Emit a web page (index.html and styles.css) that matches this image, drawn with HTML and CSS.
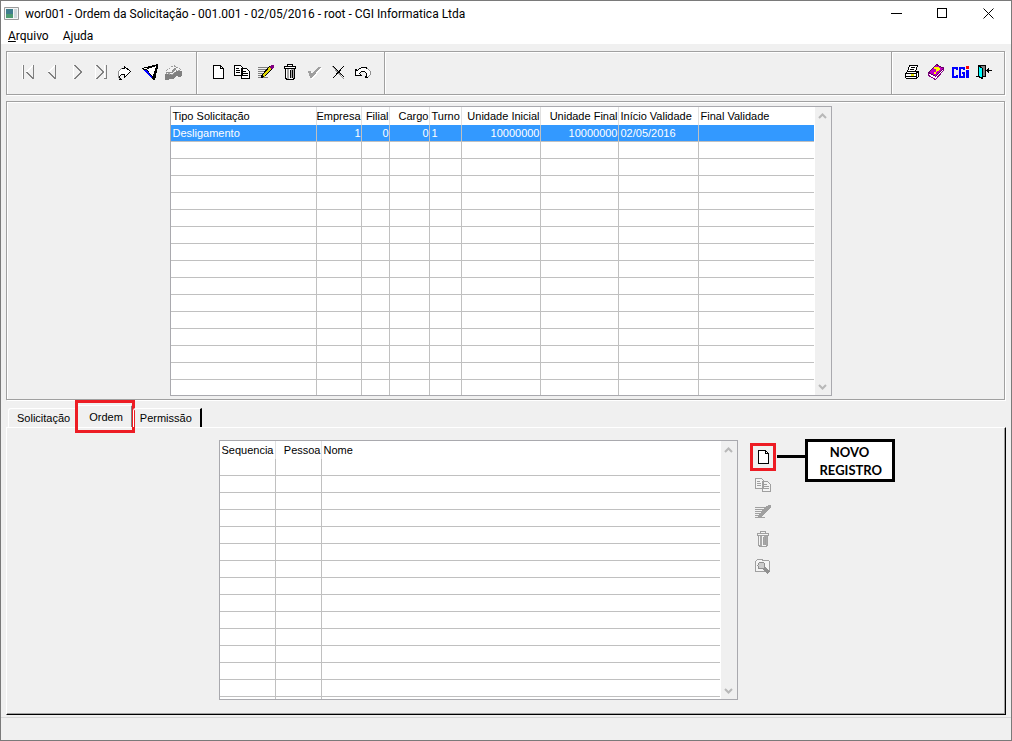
FILE: index.html
```html
<!DOCTYPE html>
<html lang="pt-BR">
<head>
<meta charset="utf-8">
<title>wor001 - Ordem da Solicitação</title>
<link rel="stylesheet" href="styles.css">
</head>
<body>
<svg class="defs" aria-hidden="true">
  <symbol id="page" viewBox="0 0 16 16"><path class="paper" d="M3.500 1.500h7l3 3v10h-10z"/><path class="ink" d="M10.500 1.500v3h3"/></symbol>
  <symbol id="copy" viewBox="0 0 16 16"><path class="paper" d="M.5 1.500h6l2 2v8h-8zM7.500 4.500h5l3 3v7h-8z"/><path class="ink" d="M2 4.500h3M2 6.500h4M2 8.500h4M9 7.500h3M9 9.500h5M9 11.500h5"/></symbol>
  <symbol id="edit" viewBox="0 0 16 16"><path class="lines" d="M0 3.500h10M0 5.500h9M0 7.500h7M0 9.500h5M0 11.500h4M0 13.500h10"/><path class="pencil" d="M4.500 10.500l7-8 3 2-8 8-3 1z"/><path class="tip" d="M11 3l2-2h2l1 1v1l-2 2z"/><path class="nib" d="M3 14v-3l3 2z"/></symbol>
  <symbol id="trash" viewBox="0 0 16 16"><path class="paper" d="M3.500 4.500h9v9l-1 2h-7l-1-2zM2.500 2.500h11v2h-11zM5.500 .5h5v2h-5z"/><path class="shade" d="M5 5h2v10H5zM9 5h3v9H9z"/><path class="ink" d="M8.500 6v8M10.500 6v8M2 4.500h12"/></symbol>
</svg>
<div class="window">
  <header class="titlebar">
    <svg class="appicon" width="15" height="13" viewBox="0 0 15 13"><path fill="#f4f6f6" stroke="#9a9a9a" d="M.5.5h14v12H.5z"/><path fill="#3f7d8d" d="M2 2h7v5H2z"/><path fill="#4c9a70" d="M2 7h7v4H2z"/><path fill="#cfd8dc" d="M10 2h3v9h-3z"/></svg>
    <h1>wor001 - Ordem da Solicitação - 001.001 - 02/05/2016 - root - CGI Informatica Ltda</h1>
    <button class="winbtn" aria-label="Minimizar"><svg width="11" height="11" viewBox="0 0 11 11"><path d="M0 5.500h11"/></svg></button>
    <button class="winbtn" aria-label="Maximizar"><svg width="11" height="11" viewBox="0 0 11 11"><path d="M.5.5h9v9h-9z"/></svg></button>
    <button class="winbtn smooth" aria-label="Fechar"><svg width="11" height="11" viewBox="0 0 11 11"><path d="M.5.5l10 10M10.500.5l-10 10"/></svg></button>
  </header>
  <nav class="menubar">
    <button><u>A</u>rquivo</button>
    <button>Ajuda</button>
  </nav>

  <div class="toolbar frame" role="toolbar">
    <div class="group">
      <button aria-label="Primeiro"><svg viewBox="0 0 16 16"><path class="hi" d="M2.500 1v14M13.500 1l-7 7"/><path class="lo" d="M3.500 1v14M13.500 1v14M6.500 8l7 7"/></svg></button>
      <button aria-label="Anterior"><svg viewBox="0 0 16 16"><path class="hi" d="M11.500 1l-7 7"/><path class="lo" d="M11.500 1v14M4.500 8l7 7"/></svg></button>
      <button aria-label="Próximo"><svg viewBox="0 0 16 16"><path class="hi" d="M5.500 1v14"/><path class="lo" d="M6.500 1l7 7-7 7"/></svg></button>
      <button aria-label="Último"><svg viewBox="0 0 16 16"><path class="hi" d="M3.500 1v14M12.500 1v13"/><path class="lo" d="M4.500 1l7 7-7 7M12 14.500h2.500V1"/></svg></button>
      <button aria-label="Ir para"><svg viewBox="0 0 16 16"><path fill="#fff" stroke="#000" d="M5.500 15.500h-2v-3l2-2h3v3l6-6-6-5v2h-3l-3 3v5z"/><path fill="none" stroke="#909090" d="M5.500 4.500l-3 3v6l2 2"/></svg></button>
      <button aria-label="Filtrar"><svg viewBox="0 0 16 16"><path fill="#000" d="M2 4l16-4v3l-3 13h-2z"/><path fill="#00f" d="M4 6h3l5 7v2z"/><path fill="#fff" d="M7 5l9-3-3 10h-1z"/><path fill="#fff" d="M4 4h3v1H4z"/></svg></button>
      <button aria-label="Limpar filtro"><svg viewBox="0 0 16 16"><path fill="#808080" d="M1 10h8l3-3h6v5l-3 1-3-1-3 3-8 1z"/><path fill="#f4f4f4" stroke="#a0a0a0" stroke-dasharray="2 1" d="M2.500 6.500l7-5 2 1 5 3v1h-4l-4 4-6-1z"/><path stroke="#909090" fill="none" d="M2 8.500h6l4-4M8 6.500l5-3"/></svg></button>
    </div>
    <div class="group editing">
      <button aria-label="Novo"><svg><use href="#page"/></svg></button>
      <button aria-label="Copiar"><svg><use href="#copy"/></svg></button>
      <button aria-label="Editar"><svg><use href="#edit"/></svg></button>
      <button aria-label="Excluir"><svg><use href="#trash"/></svg></button>
      <button aria-label="Confirmar"><svg viewBox="0 0 16 16"><path fill="#fff" d="M3 8h3l1 3 6-7h3L7 15H5z"/><path fill="#a0a0a0" d="M2 7h3l1 3 6-7h3L6 14H4z"/></svg></button>
      <button aria-label="Cancelar"><svg viewBox="0 0 16 16"><path fill="none" stroke="#909090" d="M2 2l12 13"/><path fill="none" stroke="#000" d="M3 2l11 11M14 2L3 14"/></svg></button>
      <button aria-label="Desfazer"><svg viewBox="0 0 16 16"><path fill="#fff" stroke="#000" d="M1.500 5.500v6h6l-2-2 2-2h3l2 2v2l-1 2h2l3-3v-3l-3-3-2-1h-3l-3 1-2 2z"/><path fill="none" stroke="#909090" d="M13.500 13.500l3-3v-3l-3-3"/></svg></button>
    </div>
    <div class="group fill"></div>
    <div class="group">
      <button aria-label="Imprimir"><svg viewBox="0 0 16 16"><path fill="#fff" stroke="#000" d="M3.500 7.500l2-6h8l-2 6"/><path fill="#fff" stroke="#000" d="M1.500 9.500l2-2h11v5l-2 2h-10l-1-1z"/><path fill="none" stroke="#000" d="M7 3.500h4M6 5.500h4M2 9.500h10l2-2M12.500 10v4M2 12.500h10"/><path fill="#e8e800" d="M7 10h3v2H7z"/></svg></button>
      <button aria-label="Ajuda"><svg viewBox="0 0 16 16"><path fill="#fff" stroke="#800080" d="M.5 8.500v3l7 4 8-9v-3z"/><path fill="#c000c0" stroke="#600060" d="M.5 8.500l8-8 7 4-8 8z"/><path fill="none" stroke="#ff0" stroke-width="2" d="M6 4.500l3-1 2 1.500-3 2M6 8.500h2"/></svg></button>
      <button aria-label="CGI"><svg class="wide" width="18" height="16" viewBox="0 0 18 16"><path fill="none" stroke="#00f" stroke-width="2" d="M6 6V4H2v9h4v-2M13 6V4H9v9h4V9h-2"/><path fill="#00f" d="M15 6h3v8h-3z"/><path fill="#f00" d="M15 2h3v3h-3z"/></svg></button>
      <button aria-label="Sair"><svg viewBox="0 0 16 16"><path fill="#808080" stroke="#000" d="M2.500 1.500h7v11h-7z"/><path fill="#0ff" stroke="#000" d="M2.500 1.500l4 3v10l-4-2z"/><path fill="none" stroke="#000" d="M0 12.500h3M7 12.500h3M10 6.500h6M12.500 4v5M11.500 5v3"/></svg></button>
    </div>
  </div>

  <section class="frame upper">
    <div class="grid">
      <table class="orders">
        <colgroup><col class="w146"><col class="w45"><col class="w28"><col class="w40"><col class="w32"><col class="w79"><col class="w78"><col class="w80"><col></colgroup>
        <thead><tr><th>Tipo Solicitação</th><th class="n">Empresa</th><th class="n">Filial</th><th class="n">Cargo</th><th>Turno</th><th class="n">Unidade Inicial</th><th class="n">Unidade Final</th><th>Início Validade</th><th>Final Validade</th></tr></thead>
        <tbody>
          <tr class="selected"><td>Desligamento</td><td class="n">1</td><td class="n">0</td><td class="n">0</td><td>1</td><td class="n">10000000</td><td class="n">10000000</td><td>02/05/2016</td><td></td></tr>
          <tr><td><td><td><td><td><td><td><td><td></tr>
          <tr><td><td><td><td><td><td><td><td><td></tr>
          <tr><td><td><td><td><td><td><td><td><td></tr>
          <tr><td><td><td><td><td><td><td><td><td></tr>
          <tr><td><td><td><td><td><td><td><td><td></tr>
          <tr><td><td><td><td><td><td><td><td><td></tr>
          <tr><td><td><td><td><td><td><td><td><td></tr>
          <tr><td><td><td><td><td><td><td><td><td></tr>
          <tr><td><td><td><td><td><td><td><td><td></tr>
          <tr><td><td><td><td><td><td><td><td><td></tr>
          <tr><td><td><td><td><td><td><td><td><td></tr>
          <tr><td><td><td><td><td><td><td><td><td></tr>
          <tr><td><td><td><td><td><td><td><td><td></tr>
          <tr><td><td><td><td><td><td><td><td><td></tr>
          <tr class="cut"><td><td><td><td><td><td><td><td><td></tr>
        </tbody>
      </table>
      <div class="scroll">
        <button aria-label="Rolar para cima"><svg width="9" height="6" viewBox="0 0 9 6"><path d="M1 5l3.500-3.500L8 5"/></svg></button>
        <button aria-label="Rolar para baixo"><svg width="9" height="6" viewBox="0 0 9 6"><path d="M1 1l3.500 3.500L8 1"/></svg></button>
      </div>
    </div>
  </section>

  <div class="tabs" role="tablist">
    <button role="tab">Solicitação</button>
    <button role="tab" class="active" aria-selected="true">Ordem</button>
    <button role="tab" class="last">Permissão</button>
  </div>

  <section class="tabpanel">
    <div class="grid">
      <table class="people">
        <colgroup><col class="w56"><col class="w46"><col></colgroup>
        <thead><tr><th>Sequencia</th><th class="n">Pessoa</th><th>Nome</th></tr></thead>
        <tbody>
          <tr><td><td><td></tr>
          <tr><td><td><td></tr>
          <tr><td><td><td></tr>
          <tr><td><td><td></tr>
          <tr><td><td><td></tr>
          <tr><td><td><td></tr>
          <tr><td><td><td></tr>
          <tr><td><td><td></tr>
          <tr><td><td><td></tr>
          <tr><td><td><td></tr>
          <tr><td><td><td></tr>
          <tr><td><td><td></tr>
          <tr><td><td><td></tr>
          <tr><td><td><td></tr>
          <tr class="cut short"><td><td><td></tr>
        </tbody>
      </table>
      <div class="scroll">
        <button aria-label="Rolar para cima"><svg width="9" height="6" viewBox="0 0 9 6"><path d="M1 5l3.500-3.500L8 5"/></svg></button>
        <button aria-label="Rolar para baixo"><svg width="9" height="6" viewBox="0 0 9 6"><path d="M1 1l3.500 3.500L8 1"/></svg></button>
      </div>
    </div>
    <div class="side">
      <button class="marked" aria-label="Novo registro"><svg><use href="#page"/></svg></button>
      <button class="off" aria-label="Copiar registro"><svg><use href="#copy"/></svg></button>
      <button class="off" aria-label="Editar registro"><svg><use href="#edit"/></svg></button>
      <button class="off" aria-label="Excluir registro"><svg><use href="#trash"/></svg></button>
      <button class="off" aria-label="Consultar registro"><svg viewBox="0 0 16 16"><path fill="#f4f4f4" stroke="#a0a0a0" d="M.5 3.500l2-2h4l2 1h5l1 1v10H.5z"/><circle cx="6.500" cy="7.500" r="3.500" fill="#ccc" stroke="#909090"/><path stroke="#909090" stroke-width="3" d="M9 10l5 5"/></svg></button>
      <p class="callout">NOVO REGISTRO</p>
    </div>
  </section>
  <footer class="status"></footer>
</div>
</body>
</html>
```
FILE: styles.css
```css
* { box-sizing: border-box; }

body {
  margin: 0;
  color: #000;
  background: #f0f0f0;
  font: 11px/16px "Liberation Sans", Arial, sans-serif;
}

button {
  display: flex;
  align-items: center;
  justify-content: center;
  margin: 0;
  padding: 0;
  border: 0;
  background: none;
  color: inherit;
  font: inherit;
}

.defs { display: none; }

.window {
  display: flex;
  flex-direction: column;
  min-height: 100vh;
  border: 1px solid #7a7a7a;
}

.titlebar, .menubar {
  display: flex;
  align-items: center;
  background: #fff;
  font: 12px/18px Roboto, "Noto Sans", sans-serif;
}
.titlebar { height: 25px; padding-left: 3px; }
.titlebar h1 { flex: 1; margin: 0 0 0 6px; font: inherit; }
.winbtn { width: 46px; height: 25px; }
.winbtn svg { fill: none; stroke: #000; shape-rendering: crispEdges; }
.winbtn.smooth svg { shape-rendering: auto; }
.menubar { height: 18px; padding: 2px 0 0 7px; gap: 14px; }

.frame {
  margin: 7px 6px 0 5px;
  border: 1px solid #a0a0a0;
  box-shadow: inset 1px 1px 0 #fff, 1px 1px 0 #fff;
}

.toolbar { display: flex; height: 44px; }
.group {
  display: flex;
  align-items: center;
  padding: 0 12px 2px 9px;
  border-right: 1px solid #a0a0a0;
  box-shadow: 1px 0 0 #fff;
}
.group.editing { padding-right: 10px; }
.group:last-child { border-right: 0; box-shadow: none; padding: 0 8px 2px; }
.group.fill { flex: 1; }
.group button { width: 24px; height: 24px; }
.group svg, .side svg {
  width: 16px;
  height: 16px;
  overflow: visible;
  shape-rendering: crispEdges;
}
.group svg.wide { width: 18px; }
.hi { fill: none; stroke: #fff; }
.lo { fill: none; stroke: #808080; }

.paper { fill: var(--paper, #fff); stroke: var(--ink, #000); }
.ink { fill: none; stroke: var(--ink, #000); }
.lines { fill: none; stroke: var(--ink, #808080); }
.pencil { fill: var(--ink, #e0d800); stroke: var(--ink, #000); }
.tip { fill: var(--ink, #800080); }
.nib { fill: var(--ink, #000); }
.shade { fill: #a8a8a8; }
.off { --ink: #a0a0a0; --paper: #f4f4f4; }

.upper {
  display: flex;
  justify-content: center;
  margin-top: 6px;
  padding: 4px 10px 3px 0;
}

.grid {
  display: flex;
  border: 1px solid #a9a9ae;
  background: #fff;
}
table { table-layout: fixed; border-collapse: separate; border-spacing: 0; }
.orders { width: 643px; }
.people { width: 500px; }
.w146 { width: 146px; }
.w45 { width: 45px; }
.w28 { width: 28px; }
.w40 { width: 40px; }
.w32 { width: 32px; }
.w79 { width: 79px; }
.w78 { width: 78px; }
.w80 { width: 80px; }
.w56 { width: 56px; }
.w46 { width: 46px; }

th, td {
  height: 17px;
  padding: 0 1px 0 2px;
  border-right: 1px solid #c0c0c0;
  border-bottom: 1px solid #c0c0c0;
  font-weight: 400;
  text-align: left;
  white-space: nowrap;
}
th { height: 18px; border-bottom: 0; border-right-color: #e0e0e0; }
th:last-child, td:last-child { border-right: 0; }
.n { padding: 0; text-align: right; }
.selected td { background: #3399ff; color: #fff; }
.cut td { height: 15px; border-bottom: 0; }
.cut.short td { height: 2px; padding: 0; line-height: 0; }

.scroll {
  display: flex;
  flex-direction: column;
  justify-content: space-between;
  width: 17px;
  border-left: 1px solid #fff;
  background: #f0f0f0;
}
.scroll button { height: 17px; }
.scroll svg { fill: none; stroke: #b8b8b8; stroke-width: 2; }

.tabs {
  display: flex;
  align-items: flex-end;
  height: 27px;
  padding-left: 7px;
}
.tabs button {
  position: relative;
  height: 19px;
  padding: 0 5px 0 8px;
  border: 1px solid #fff;
  border-width: 1px 0 0 1px;
  border-radius: 3px 0 0 0;
}
.tabs .active { height: 22px; padding: 0 8px 0 13px; border-right: 2px solid #808080; }
.tabs .active::after {
  content: "";
  position: absolute;
  inset: -6px -4px -6px -1px;
  border: 3px solid #ed1c24;
}
.tabs .last { padding: 0 8px 0 6px; border-right: 2px solid #000; }

.tabpanel {
  display: flex;
  flex: 1;
  align-items: flex-start;
  justify-content: center;
  gap: 12px;
  margin: 0 5px 2px;
  padding: 12px 18px 14px 0;
  border: 1px solid #fff;
  border-right-color: #000;
  border-bottom-color: #000;
  box-shadow: inset -1px -1px 0 #a0a0a0;
}

.side { position: relative; padding-top: 3px; }
.side button { width: 26px; height: 27px; }
.side .marked { height: 28px; border: 3px solid #ed1c24; }

.callout {
  position: absolute;
  left: 55px;
  top: -1px;
  width: 90px;
  margin: 0;
  padding: 1px 12px 0;
  border: 3px solid #000;
  background: #fff;
  font: 700 13px/18px Lato, sans-serif;
  text-align: center;
}
.callout::before {
  content: "";
  position: absolute;
  right: 100%;
  top: 13px;
  width: 31px;
  height: 3px;
  background: #000;
}

.status { height: 23px; border-top: 1px solid #d7d7d7; }
```
